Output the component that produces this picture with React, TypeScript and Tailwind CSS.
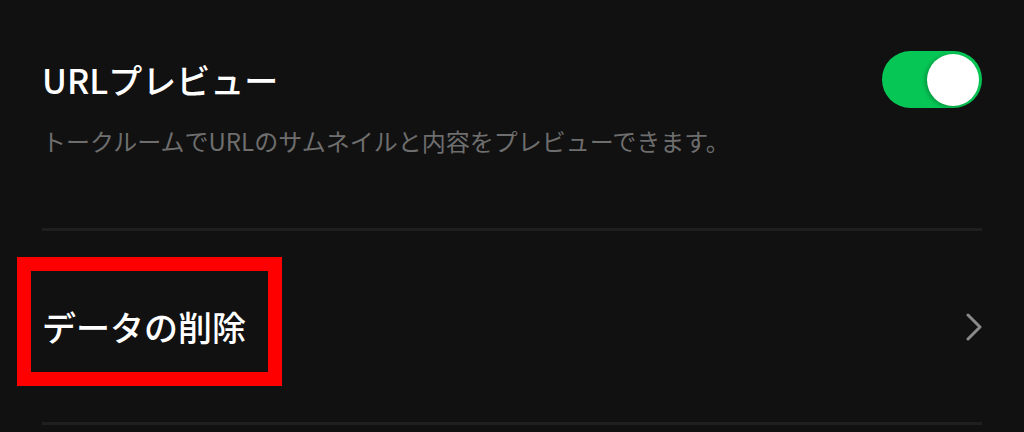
import React from "react";

const jp = { fontFamily: '"Noto Sans CJK JP", "Noto Sans", sans-serif' };

function Toggle({ on }: { on: boolean }) {
  return (
    <div
      className={`flex h-[57px] w-[100px] shrink-0 items-center rounded-full px-[3px] ${
        on ? "justify-end bg-[#06c755]" : "justify-start bg-[#3a3a3a]"
      }`}
    >
      <div className="h-[52px] w-[52px] rounded-full bg-white shadow-[-2px_1px_4px_rgba(0,0,0,0.25)]" />
    </div>
  );
}

function Chevron() {
  return (
    <svg width="16" height="28" viewBox="0 0 16 28" fill="none" className="shrink-0">
      <polyline
        points="2,2 14,14 2,26"
        stroke="#8a8a8a"
        strokeWidth="3"
        strokeLinecap="round"
        strokeLinejoin="round"
      />
    </svg>
  );
}

export default function App() {
  return (
    <div className="relative h-[432px] w-[1024px] overflow-hidden bg-[#111111]" style={jp}>
      <div className="px-[42px]">
        {/* URL preview setting */}
        <div className="pt-[51px]">
          <div className="flex h-[57px] items-center justify-between">
            <p className="text-[34px] font-medium leading-[40px] text-white">URLプレビュー</p>
            <Toggle on />
          </div>
          <p className="mt-[17px] text-[24px] leading-[32px] text-[#6e6e6e]">
            トークルームでURLのサムネイルと内容をプレビューできます。
          </p>
        </div>
        <div className="mt-[71px] h-[3px] bg-[#1f1f1f]" />

        {/* delete data row */}
        <div className="flex h-[191px] items-center justify-between">
          <p className="text-[34px] font-medium leading-[40px] text-white">データの削除</p>
          <Chevron />
        </div>
        <div className="h-[3px] bg-[#1f1f1f]" />
      </div>

      {/* highlight annotation */}
      <div className="absolute left-[17px] top-[257px] h-[129px] w-[265px] border-[14px] border-[#ff0000]" />
    </div>
  );
}
